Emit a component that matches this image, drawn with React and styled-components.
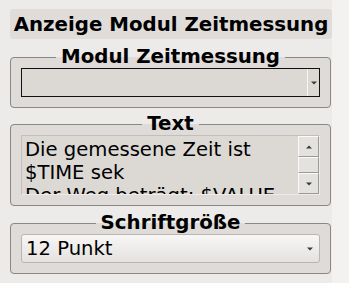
import React from 'react';
import styled, { createGlobalStyle } from 'styled-components';

const GlobalStyle = createGlobalStyle`
    html, body {
        margin: 0;
        padding: 0;
        background: #f3f2f1;
    }
    body {
        font-family: "DejaVu Sans", "Liberation Sans", sans-serif;
        color: #000;
    }
`;

//#region styled-components
const Page = styled.div`
    display: flex;
    flex-direction: column;
    width: 332px;
    height: 283px;
    padding: 9px 0 0 10px;
    box-sizing: border-box;
    background: #edebe9;
`;

const TitleBar = styled.div`
    display: flex;
    justify-content: center;
    align-items: center;
    height: 30px;
    margin-bottom: 7px;
    border-radius: 3px;
    background: #dfdcd9;
    font-size: 19.8px;
    font-weight: bold;
    white-space: nowrap;
`;

const Group = styled.fieldset`
    margin: 0 1px ${(props) => props.$gap || 0}px 0;
    padding: 0 10px ${(props) => props.$bottom || 10}px 10px;
    min-inline-size: 0;
    border: 1px solid #8b8884;
    border-radius: 4px;
    background: #dedbd8;
`;

const Legend = styled.legend`
    margin: 0 auto;
    padding: 0 5px;
    font-size: 19.8px;
    font-weight: bold;
    line-height: 22px;
    white-space: nowrap;
`;

const EmptyCombo = styled.div`
    display: flex;
    height: 29px;
    box-sizing: border-box;
    border: 1px solid #111;
    background: #dcd9d5;
`;

const ComboButton = styled.div`
    display: flex;
    justify-content: center;
    align-items: center;
    width: 11px;
    margin-left: auto;
    border-left: 1px solid #f6f5f4;
`;

const TextBox = styled.div`
    display: flex;
    height: 60px;
    box-sizing: border-box;
    border-top: 1px solid #c2bfbb;
    border-left: 1px solid #c2bfbb;
    border-bottom: 1px solid #eeecea;
    border-right: 1px solid #eeecea;
    background: #dcd9d5;
`;

const TextContent = styled.div`
    flex: 1;
    overflow: hidden;
    padding: 2px 0 0 3px;
    font-size: 19.6px;
    line-height: normal;
    white-space: pre;
`;

const ScrollBar = styled.div`
    display: flex;
    flex-direction: column;
    width: 21px;
`;

const ScrollPart = styled.div`
    display: flex;
    justify-content: center;
    align-items: center;
    flex: ${(props) => (props.$grow ? 1 : 'none')};
    height: ${(props) => (props.$grow ? 'auto' : '21px')};
    box-sizing: border-box;
    border-top: 1px solid #fbfaf9;
    border-left: 1px solid #fbfaf9;
    border-bottom: 1px solid #9d9a96;
    border-right: 1px solid #9d9a96;
    background: #e4e2df;
`;

const SizeCombo = styled.div`
    display: flex;
    align-items: center;
    height: 29px;
    padding: 0 6px 0 4px;
    box-sizing: border-box;
    border: 1px solid #b9b6b2;
    border-radius: 3px;
    background: linear-gradient(#f8f7f6, #e4e2df);
    font-size: 19.6px;
`;

const ComboText = styled.span`
    flex: 1;
`;
//#endregion

const Arrow = ({ up }) => (
    <svg width="6" height="4" viewBox="0 0 6 4">
        <path d={up ? 'M0 3.5 L3 0.5 L6 3.5 Z' : 'M0 0.5 L6 0.5 L3 3.5 Z'} fill="#3a3a3a" />
    </svg>
);

export default function App() {
    return (
        <>
            <GlobalStyle />
            <Page>
                <TitleBar>Anzeige Modul Zeitmessung</TitleBar>

                <Group $gap={5}>
                    <Legend>Modul Zeitmessung</Legend>
                    <EmptyCombo>
                        <ComboButton>
                            <Arrow />
                        </ComboButton>
                    </EmptyCombo>
                </Group>

                <Group $gap={6}>
                    <Legend>Text</Legend>
                    <TextBox>
                        <TextContent>
                            {'Die gemessene Zeit ist\n$TIME sek\nDer Weg beträgt: $VALUE'}
                        </TextContent>
                        <ScrollBar>
                            <ScrollPart>
                                <Arrow up />
                            </ScrollPart>
                            <ScrollPart $grow />
                            <ScrollPart>
                                <Arrow />
                            </ScrollPart>
                        </ScrollBar>
                    </TextBox>
                </Group>

                <Group>
                    <Legend>Schriftgröße</Legend>
                    <SizeCombo>
                        <ComboText>12 Punkt</ComboText>
                        <Arrow />
                    </SizeCombo>
                </Group>
            </Page>
        </>
    );
}
